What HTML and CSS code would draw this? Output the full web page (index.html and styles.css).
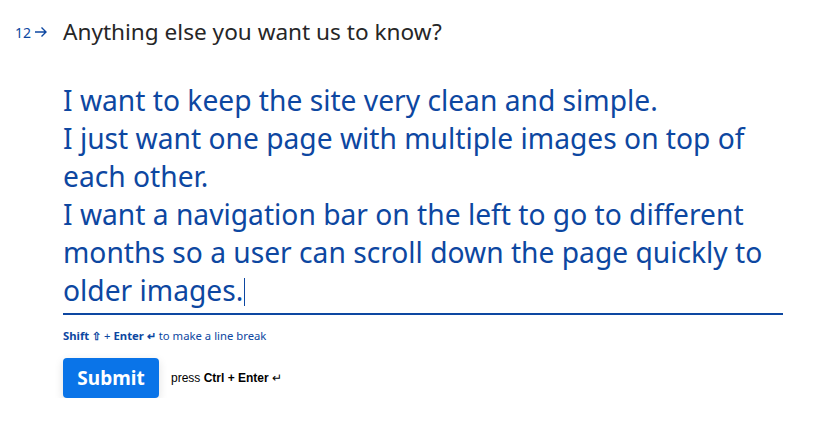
FILE: index.html
```html
<!DOCTYPE html>
<html>
<head>
<meta charset="utf-8">
<link rel="stylesheet" href="styles.css">
</head>
<body>
<div class="form">
  <div class="q-row">
    <div class="q-num"><span>12</span><svg class="arrow" width="14" height="12" viewBox="0 0 14 12"><path d="M1 6h11M7.5 1.5L12 6l-4.5 4.5" fill="none" stroke="currentColor" stroke-width="1.4"/></svg></div>
    <div class="q-text">Anything else you want us to know?</div>
  </div>
  <div class="answer">
    <div class="answer-text">I want to keep the site very clean and simple.<br>I just want one page with multiple images on top of<br>each other.<br>I want a navigation bar on the left to go to different<br>months so a user can scroll down the page quickly to<br>older images.<span class="caret"></span></div>
  </div>
  <div class="hint"><b>Shift ⇧</b> + <b>Enter ↵</b> to make a line break</div>
  <div class="actions">
    <button class="submit">Submit</button>
    <span class="press">press <b>Ctrl + Enter</b> ↵</span>
  </div>
</div>
</body>
</html>
```
FILE: styles.css
```css
html, body {
  margin: 0;
  padding: 0;
  background: #fff;
}
body {
  font-family: "Noto Sans", "Open Sans", sans-serif;
}
.form {
  padding: 18px 31px 0 15px;
}
.q-row {
  display: flex;
  align-items: center;
}
.q-num {
  width: 48px;
  display: flex;
  align-items: center;
  gap: 3px;
  color: #0d47a1;
  font-size: 14px;
}
.arrow {
  color: #0d47a1;
  margin-top: -1px;
}
.q-text {
  font-size: 22.6px;
  color: #262627;
  line-height: 28px;
}
.answer {
  margin-left: 48px;
  margin-top: 35px;
  border-bottom: 2px solid #0d47a1;
  padding-bottom: 4px;
}
.answer-text {
  font-size: 28.2px;
  line-height: 38px;
  color: #0d47a1;
}
.caret {
  display: inline-block;
  width: 1px;
  height: 28px;
  background: #0d47a1;
  vertical-align: -5px;
  margin-left: 1px;
}
.hint {
  margin-left: 48px;
  margin-top: 13px;
  font-size: 11.3px;
  color: #0d47a1;
}
.hint b {
  font-weight: 700;
}
.actions {
  margin-left: 48px;
  margin-top: 15px;
  display: flex;
  align-items: center;
  gap: 12px;
}
.submit {
  width: 96px;
  height: 40px;
  border: none;
  border-radius: 4px;
  background: #0a74e8;
  color: #fff;
  font-family: "Noto Sans", sans-serif;
  font-weight: 700;
  font-size: 19px;
  box-shadow: 0 3px 10px rgba(0,0,0,0.12);
  padding: 0;
}
.press {
  font-family: "Liberation Sans", Arial, sans-serif;
  font-size: 12px;
  color: #000;
}
```
